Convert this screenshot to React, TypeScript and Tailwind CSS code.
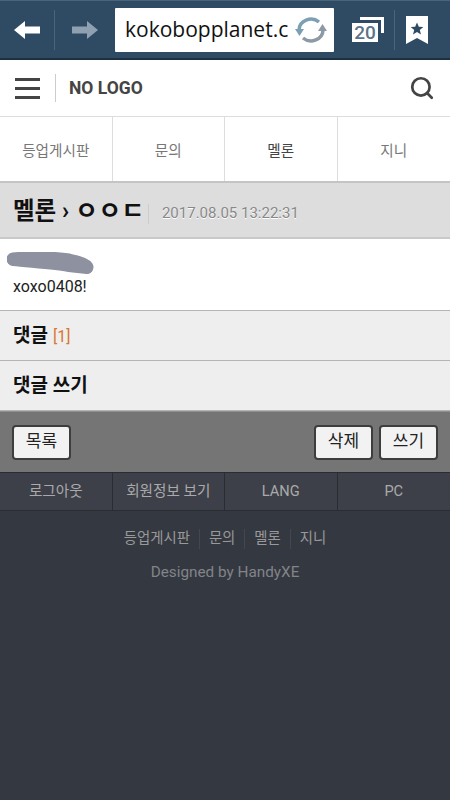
import { Search } from 'lucide-react';

const FONT = "font-['Roboto','Noto_Sans_CJK_KR',sans-serif]";

const topNav = ['등업게시판', '문의', '멜론', '지니'];
const bottomNav = ['로그아웃', '회원정보 보기', 'LANG', 'PC'];

function BrowserBar() {
  return (
    <div className="flex h-[60px] items-center bg-[#2f4b64] border-t border-[#4a6479] border-b-2 border-b-[#1d3041]">
      <div className="flex h-[40px] w-[55px] shrink-0 items-center justify-center border-r border-[#4a6479]">
        <svg width="28" height="20" viewBox="0 0 28 20">
          <path d="M1 10 L12 1 V6.5 H27 V13.5 H12 V19 Z" fill="#ffffff" />
        </svg>
      </div>
      <div className="flex h-[40px] w-[60px] shrink-0 items-center justify-center">
        <svg width="28" height="20" viewBox="0 0 28 20">
          <path d="M27 10 L16 1 V6.5 H1 V13.5 H16 V19 Z" fill="#8fa1b0" />
        </svg>
      </div>
      <div className="flex h-[44px] w-[219px] shrink-0 items-center overflow-hidden rounded-[1px] bg-white pl-[10px]">
        <span className="w-[170px] shrink-0 whitespace-nowrap font-['Open_Sans',sans-serif] text-[21px] text-[#111111]">
          kokobopplanet.c
        </span>
        <svg width="34" height="28" viewBox="0 0 34 28" className="-ml-[1px] shrink-0">
          <path d="M5 14 A12 11 0 0 1 25 6" fill="none" stroke="#7c9fb4" strokeWidth="3.5" />
          <path d="M1 13 H10 L5.500 20 Z" fill="#7c9fb4" />
          <path d="M29 14 A12 11 0 0 1 9 22" fill="none" stroke="#8d9aa5" strokeWidth="3.5" />
          <path d="M24 15 H33 L28.500 8 Z" fill="#8d9aa5" />
        </svg>
      </div>
      <div className="relative ml-[18px] h-[25px] w-[32px] shrink-0">
        <div className="absolute left-[8px] top-0 h-[16px] w-[24px] border-r-[3px] border-t-[3px] border-white" />
        <div className="absolute bottom-0 left-0 flex h-[19px] w-[26px] items-center justify-center bg-white font-['Roboto',sans-serif] text-[19px] font-medium leading-none text-[#5d7386]">
          20
        </div>
      </div>
      <div className="ml-[10px] flex h-[40px] w-[45px] shrink-0 items-center justify-center border-l border-[#4a6479]">
        <svg width="22" height="28" viewBox="0 0 22 28">
          <path d="M0 0 H22 V28 L11 22 L0 28 Z" fill="#ffffff" />
          <path
            d="M11 6.500 L12.800 10.800 L17.300 11.100 L13.800 14 L15 18.500 L11 16 L7 18.500 L8.200 14 L4.700 11.100 L9.200 10.800 Z"
            fill="#2f4b64"
          />
        </svg>
      </div>
    </div>
  );
}

function SiteHeader() {
  return (
    <div className="flex h-[56px] items-center bg-white pl-[15px] pr-[15px]">
      <div className="flex w-[25px] flex-col gap-[6px]">
        <div className="h-[3px] bg-[#444444]" />
        <div className="h-[3px] bg-[#444444]" />
        <div className="h-[3px] bg-[#444444]" />
      </div>
      <div className="ml-[15px] h-[28px] w-px bg-[#cccccc]" />
      <div className="ml-[13px] font-['Roboto',sans-serif] text-[17.5px] font-bold text-[#444444]">NO LOGO</div>
      <Search className="ml-auto text-[#444444]" size={26} strokeWidth={2.5} />
    </div>
  );
}

function TopNav() {
  return (
    <div className="grid h-[67px] grid-cols-4 border-t border-b-2 border-[#dddddd] border-b-[#c4c4c4] bg-white">
      {topNav.map((label, i) => (
        <div
          key={label}
          className={`flex items-center justify-center pt-[5px] text-[14.6px] ${i === 2 ? 'text-[#444444]' : 'text-[#777777]'} ${i < 3 ? 'border-r border-[#dddddd]' : ''}`}
        >
          {label}
        </div>
      ))}
    </div>
  );
}

function Section({ children }: { children: React.ReactNode }) {
  return (
    <div className="flex h-[50px] items-center border-b border-[#b5b5b5] bg-[#eeeeee] px-[13px] pt-[2px] text-[19px] font-bold text-[#111111]">
      {children}
    </div>
  );
}

function Btn({ label }: { label: string }) {
  return (
    <div className="flex h-[35px] w-[59px] items-center justify-center rounded-[4px] border-2 border-[#3d3d3d] bg-[#f2f2f2] pb-[1px] text-[17px] text-[#222222]">
      {label}
    </div>
  );
}

export default function App() {
  return (
    <div className={`flex h-[800px] w-[450px] flex-col overflow-hidden bg-[#343841] ${FONT}`}>
      <BrowserBar />
      <SiteHeader />
      <TopNav />

      <div className="flex h-[56px] items-center border-b-2 border-[#c9c9c9] bg-[#dddddd] pl-[13px] pt-[3px]">
        <span className="text-[23.5px] font-bold text-[#111111]">
          멜론 › <span className="inline-block origin-left scale-x-[1.07]">ㅇㅇㄷ</span>
        </span>
        <span className="ml-[8px] mt-[4px] h-[20px] w-px bg-[#cccccc]" />
        <span className="ml-[13px] mt-[4px] text-[15px] text-[#888888] [text-shadow:0_1px_0_#ffffff]">2017.08.05 13:22:31</span>
      </div>

      <div className="flex h-[72px] flex-col border-b border-[#b5b5b5] bg-white pl-[13px]">
        <svg width="90" height="24" viewBox="0 0 90 24" className="-ml-[6px] mt-[13px] shrink-0">
          <path d="M6 7 C25 5 50 6 62 8 C72 10 78 12 80 15" fill="none" stroke="#8e919f" strokeWidth="13" strokeLinecap="round" />
          <path d="M6 8 C25 10 50 12 62 14 L80 16" fill="none" stroke="#8e919f" strokeWidth="12" strokeLinecap="round" />
        </svg>
        <div className="mt-[1px] text-[16px] leading-[20px] text-[#222222]">xoxo0408!</div>
      </div>

      <Section>
        댓글<span className="ml-[5px] text-[16px] font-normal text-[#d9772f]">[1]</span>
      </Section>
      <Section>댓글 쓰기</Section>

      <div className="flex h-[61px] items-center justify-between border-t border-[#8f8f8f] bg-[#757575] px-[12px]">
        <Btn label="목록" />
        <div className="flex gap-[6px]">
          <Btn label="삭제" />
          <Btn label="쓰기" />
        </div>
      </div>

      <div className="grid h-[39px] grid-cols-4 border-y border-y-[#2a2c33] bg-[#3d4049]">
        {bottomNav.map((label, i) => (
          <div
            key={label}
            className={`flex items-center justify-center text-[14.6px] text-[#aaaaaa] ${i < 3 ? 'border-r border-[#2a2c33]' : ''}`}
          >
            {label}
          </div>
        ))}
      </div>

      <div className="mt-[18px] flex items-center justify-center text-[14.4px] leading-[20px] text-[#999999]">
        {topNav.map((label, i) => (
          <span key={label} className={i > 0 ? 'ml-[9px] border-l border-[#44474f] pl-[9px]' : ''}>
            {label}
          </span>
        ))}
      </div>
      <div className="mt-[13px] text-center text-[15.3px] leading-[20px] text-[#828487]">Designed by HandyXE</div>
    </div>
  );
}
